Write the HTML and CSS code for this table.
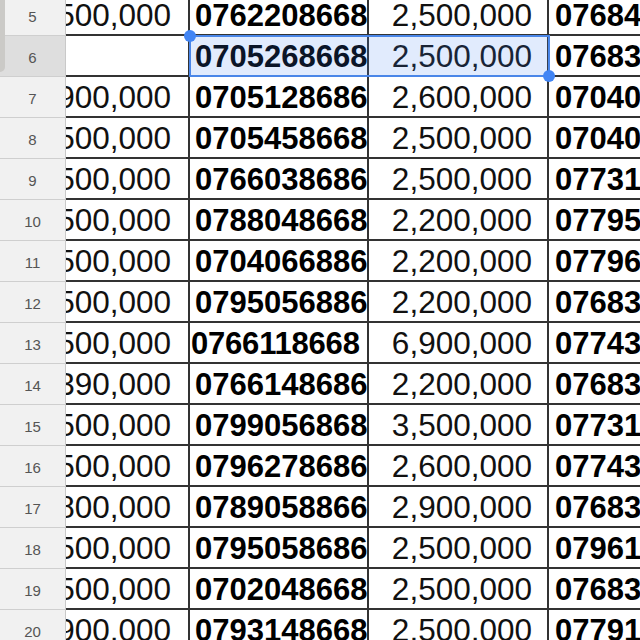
FILE: index.html
```html
<!DOCTYPE html>
<html>
<head>
<meta charset="utf-8">
<link rel="stylesheet" href="styles.css">
</head>
<body>
<div class="viewport">
  <div class="sheet">
    <div class="hdr">5</div><div class="c a"><span>500,000</span></div><div class="c ph">0762208668</div><div class="c amt">2,500,000</div><div class="c e">07684</div>
    <div class="hdr on">6</div><div class="c a"></div><div class="c ph">0705268668</div><div class="c amt">2,500,000</div><div class="c e">07683</div>
    <div class="hdr">7</div><div class="c a"><span>900,000</span></div><div class="c ph">0705128686</div><div class="c amt">2,600,000</div><div class="c e">07040</div>
    <div class="hdr">8</div><div class="c a"><span>500,000</span></div><div class="c ph">0705458668</div><div class="c amt">2,500,000</div><div class="c e">07040</div>
    <div class="hdr">9</div><div class="c a"><span>500,000</span></div><div class="c ph">0766038686</div><div class="c amt">2,500,000</div><div class="c e">07731</div>
    <div class="hdr">10</div><div class="c a"><span>500,000</span></div><div class="c ph">0788048668</div><div class="c amt">2,200,000</div><div class="c e">07795</div>
    <div class="hdr">11</div><div class="c a"><span>500,000</span></div><div class="c ph">0704066886</div><div class="c amt">2,200,000</div><div class="c e">07796</div>
    <div class="hdr">12</div><div class="c a"><span>500,000</span></div><div class="c ph">0795056886</div><div class="c amt">2,200,000</div><div class="c e">07683</div>
    <div class="hdr">13</div><div class="c a"><span>500,000</span></div><div class="c ph tight">0766118668</div><div class="c amt">6,900,000</div><div class="c e">07743</div>
    <div class="hdr">14</div><div class="c a"><span>390,000</span></div><div class="c ph">0766148686</div><div class="c amt">2,200,000</div><div class="c e">07683</div>
    <div class="hdr">15</div><div class="c a"><span>500,000</span></div><div class="c ph">0799056868</div><div class="c amt">3,500,000</div><div class="c e">07731</div>
    <div class="hdr">16</div><div class="c a"><span>500,000</span></div><div class="c ph">0796278686</div><div class="c amt">2,600,000</div><div class="c e">07743</div>
    <div class="hdr">17</div><div class="c a"><span>800,000</span></div><div class="c ph">0789058866</div><div class="c amt">2,900,000</div><div class="c e">07683</div>
    <div class="hdr">18</div><div class="c a"><span>500,000</span></div><div class="c ph">0795058686</div><div class="c amt">2,500,000</div><div class="c e">07961</div>
    <div class="hdr">19</div><div class="c a"><span>500,000</span></div><div class="c ph">0702048668</div><div class="c amt">2,500,000</div><div class="c e">07683</div>
    <div class="hdr">20</div><div class="c a"><span>900,000</span></div><div class="c ph">0793148668</div><div class="c amt">2,500,000</div><div class="c e">07791</div>
  </div>
  <div class="scrollthumb"></div>
  <div class="selection">
    <span class="handle tl"></span>
    <span class="handle br"></span>
  </div>
</div>
</body>
</html>
```

FILE: styles.css
```css
html, body {
  margin: 0;
  padding: 0;
  background: #ffffff;
}

.viewport {
  position: relative;
  width: 640px;
  height: 640px;
  overflow: hidden;
  font-family: "Liberation Sans", Arial, sans-serif;
}

.sheet {
  display: grid;
  grid-template-columns: 66px 124px 179px 180px 200px;
  grid-auto-rows: 41px;
  margin-top: -5px;
}

.hdr {
  background: #f1f1f1;
  border-right: 1px solid #c9c9c9;
  border-bottom: 1px solid #cfcfcf;
  box-sizing: border-box;
  display: flex;
  align-items: center;
  justify-content: center;
  font-size: 15px;
  color: #555555;
  padding-top: 2px;
}

.hdr.on {
  background: #dedede;
}

.c {
  box-sizing: border-box;
  border-right: 2px solid #333333;
  border-bottom: 2px solid #333333;
  display: flex;
  align-items: center;
  overflow: hidden;
  white-space: nowrap;
  font-size: 31px;
  color: #111111;
  padding-top: 2px;
}

.a {
  justify-content: flex-end;
  padding-right: 17px;
  font-size: 31.5px;
}

.a span {
  flex-shrink: 0;
}

.ph {
  font-weight: bold;
  color: #000000;
  padding-left: 5px;
}

.ph.tight {
  padding-left: 1px;
  letter-spacing: -0.2px;
}

.amt {
  justify-content: flex-end;
  padding-right: 15px;
  font-size: 31.5px;
}

.e {
  font-weight: bold;
  color: #000000;
  padding-left: 6px;
  border-right: none;
}

.scrollthumb {
  position: absolute;
  left: 0;
  top: 0;
  width: 5px;
  height: 72px;
  background: #cbcac7;
  border-bottom-right-radius: 5px;
}

.selection {
  position: absolute;
  left: 189px;
  top: 35px;
  width: 361px;
  height: 42px;
  box-sizing: border-box;
  border: 2px solid #4a86e8;
  background: rgba(66, 133, 244, 0.16);
}

.handle {
  position: absolute;
  width: 12px;
  height: 12px;
  border-radius: 50%;
  background: #4285f4;
}

.handle.tl {
  left: -7px;
  top: -7px;
}

.handle.br {
  right: -7px;
  bottom: -7px;
}
```
